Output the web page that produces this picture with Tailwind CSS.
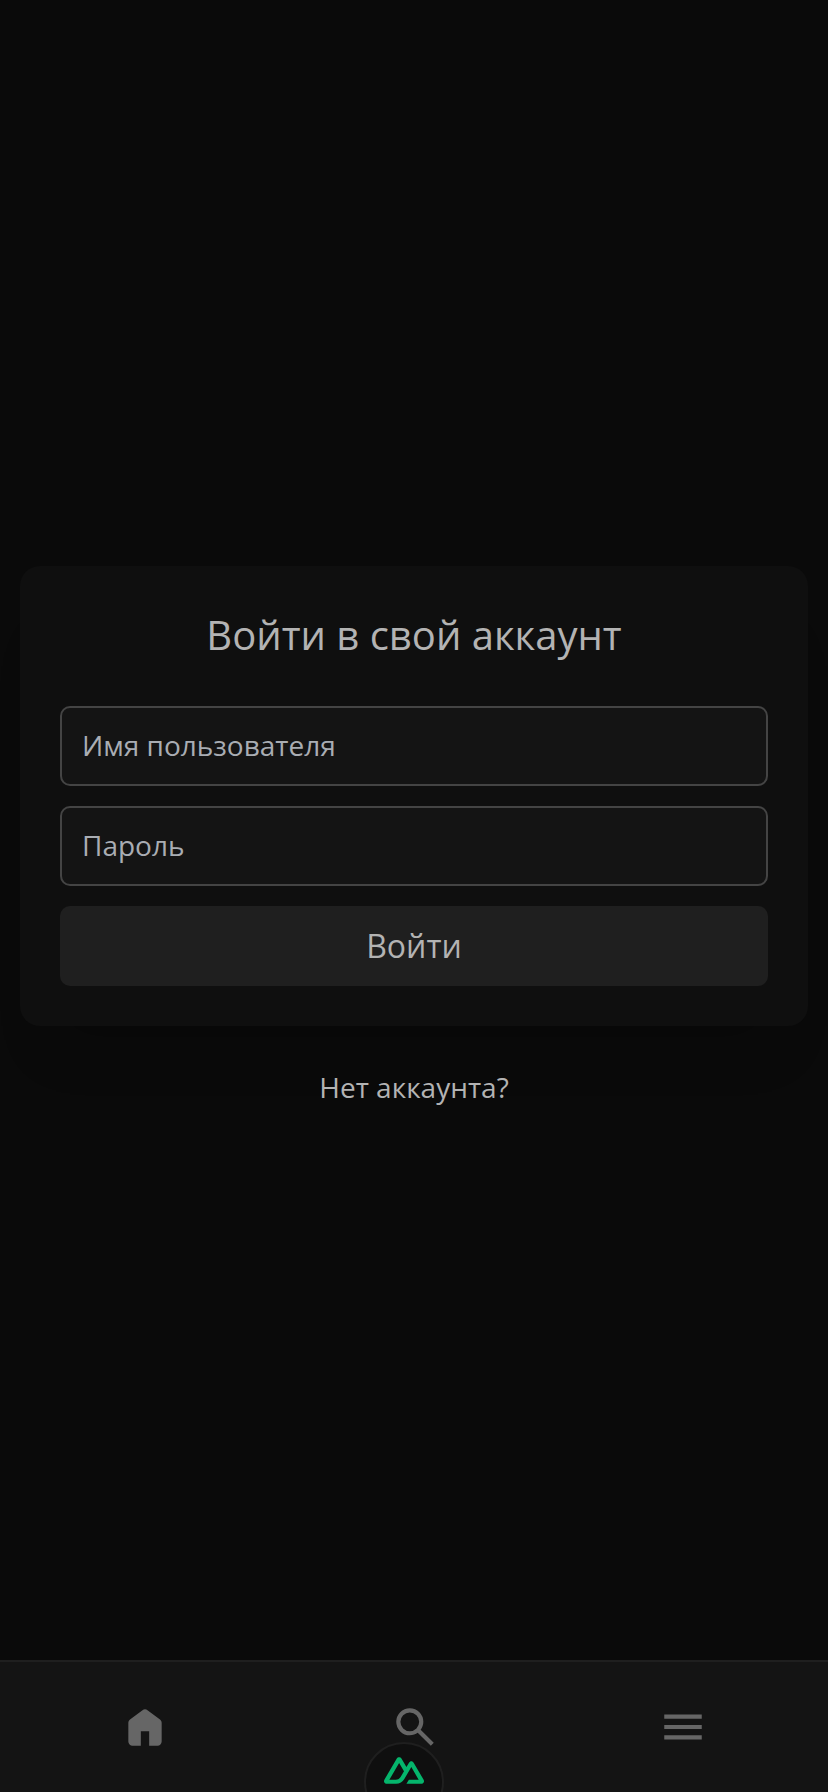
<!DOCTYPE html>
<html lang="ru">
<head>
<meta charset="utf-8">
<title>Войти</title>
<script src="https://cdn.jsdelivr.net/npm/@tailwindcss/browser@4"></script>
</head>
<body class="bg-[#0a0a0a] text-[#b3b3b3] font-['Open_Sans',sans-serif]">
<div class="relative flex h-[1792px] w-[828px] flex-col overflow-hidden">
  <main class="flex flex-1 flex-col items-center px-5 pt-[566px]">
    <form class="flex w-full flex-col gap-5 rounded-[20px] bg-[#0f0f0f] p-10 shadow-[0_50px_50px_-32px_rgba(0,0,0,0.17)]">
      <h1 class="mb-10 h-10 text-center text-[40px]/[58px]">Войти в свой аккаунт</h1>
      <input type="text" placeholder="Имя пользователя" class="h-20 w-full rounded-[10px] border-2 border-[#444] bg-[#141414] px-5 pb-0.5 text-[28px] placeholder:text-[#a9adb3]">
      <input type="password" placeholder="Пароль" class="h-20 w-full rounded-[10px] border-2 border-[#444] bg-[#141414] px-5 pb-0.5 text-[28px] placeholder:text-[#a9adb3]">
      <button type="button" class="h-20 w-full rounded-[10px] bg-[#1f1f1f] text-[32px]">Войти</button>
    </form>
    <a class="mt-10 text-[28px]/[42px]">Нет аккаунта?</a>
  </main>
  <nav class="grid h-[132px] grid-cols-3 items-start justify-items-center border-t-2 border-[#1f1f1f] bg-[#141414] px-2.5 pt-10 text-[#666]">
    <svg class="size-[50px]" viewBox="0 0 24 24" fill="currentColor"><path d="M4 19v-9q0-.475.213-.9t.587-.7l6-4.5q.525-.4 1.2-.4t1.2.4l6 4.5q.375.275.588.7T20 10v9q0 .825-.588 1.413T18 21h-4v-7h-4v7H6q-.825 0-1.412-.587T4 19"/></svg>
    <svg class="ml-[1.5px] size-[50px]" viewBox="0 0 24 24" fill="currentColor"><path d="m19.6 21l-6.3-6.3q-.75.6-1.725.95T9.5 16q-2.725 0-4.612-1.888T3 9.5t1.888-4.612T9.5 3t4.613 1.888T16 9.5q0 1.1-.35 2.075T14.7 13.3l6.3 6.3zM9.5 14q1.875 0 3.188-1.312T14 9.5t-1.312-3.187T9.5 5T6.313 6.313T5 9.5t1.313 3.188T9.5 14"/></svg>
    <svg class="size-[50px]" viewBox="0 0 24 24" fill="currentColor"><path d="M3 18h18v-2H3zm0-5h18v-2H3zm0-7v2h18V6z"/></svg>
  </nav>
  <div class="absolute left-[364px] top-[1742px] flex size-20 justify-center rounded-full border-2 border-[#1f1f1f] bg-[#0f0f0f] pt-[13px]">
    <svg class="h-[27px] w-10 shrink-0" viewBox="0 54 324 216" fill="#05b56c"><path d="M181.767 270H302.211C306.037 270 309.795 269.003 313.108 267.107C316.421 265.211 319.172 262.484 321.084 259.2C322.996 255.915 324.002 252.19 324 248.399C323.998 244.607 322.989 240.883 321.074 237.601L240.187 98.744C238.275 95.461 235.525 92.734 232.213 90.839C228.901 88.943 225.143 87.945 221.318 87.945C217.494 87.945 213.736 88.943 210.424 90.839C207.112 92.734 204.361 95.461 202.449 98.744L181.767 134.272L141.329 64.798C139.416 61.515 136.664 58.788 133.351 56.893C130.038 54.998 126.28 54 122.454 54C118.629 54 114.871 54.998 111.558 56.893C108.245 58.788 105.493 61.515 103.58 64.798L2.926 237.601C1.011 240.883 0.002 244.607 0 248.399C-0.002 252.19 1.004 255.915 2.916 259.2C4.828 262.484 7.579 265.211 10.892 267.107C14.205 269.003 17.963 270 21.789 270H97.394C127.349 270 149.44 256.959 164.641 231.517L201.546 168.172L221.313 134.272L280.637 236.1H201.546L181.767 270ZM96.161 236.065L43.398 236.054L122.49 100.291L161.953 168.172L135.531 213.543C125.436 230.051 113.968 236.065 96.161 236.065Z"/></svg>
  </div>
</div>
</body>
</html>
